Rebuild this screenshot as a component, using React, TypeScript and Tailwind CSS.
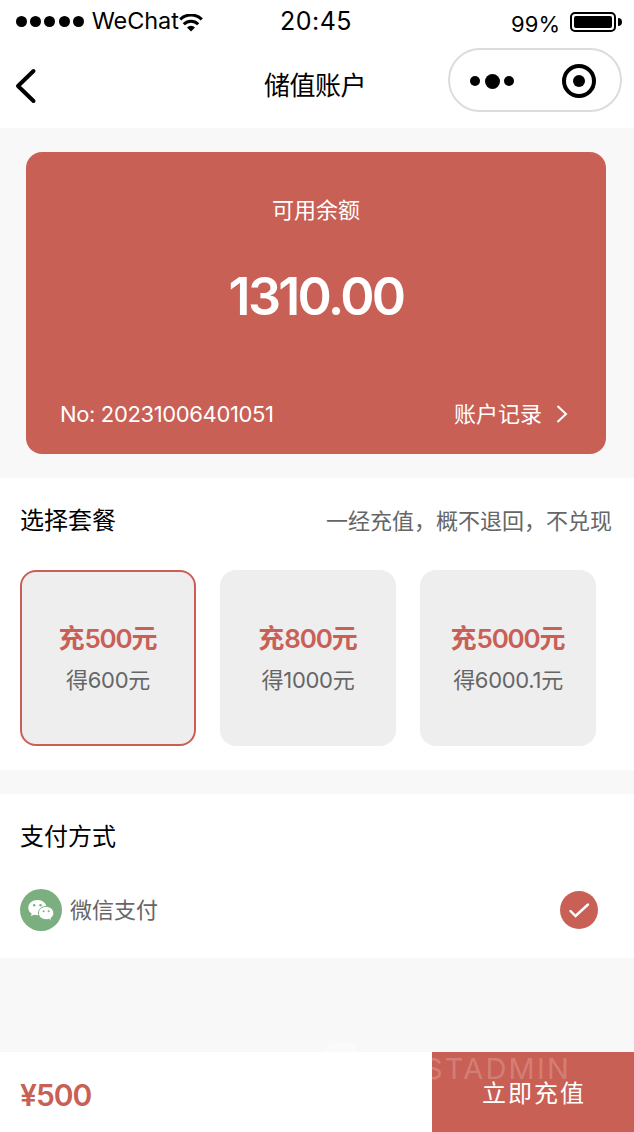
import { useState } from "react";
import clsx from "clsx";

interface Plan {
  id: number;
  price: number;
  gain: number;
}

const plans: Plan[] = [
  { id: 1, price: 500, gain: 600 },
  { id: 2, price: 800, gain: 1000 },
  { id: 3, price: 5000, gain: 6000.1 },
];

function StatusBar() {
  return (
    <div className="grid grid-cols-3 h-11 px-4 leading-[40px]">
      <div className="flex h-[43px] items-center">
        <div className="flex gap-[3.2px]">
          {Array.from({ length: 5 }, (_, i) => (
            <span key={i} className="size-[11px] rounded-full bg-black" />
          ))}
        </div>
        <span className="-mt-[2px] ml-2 text-[23.5px] tracking-[-0.1px]">WeChat</span>
        <svg width="24" height="18" viewBox="0 0 24 18" className="mt-[3px] shrink-0" fill="none" stroke="black" strokeWidth="3">
          <path d="M1.2 5.4a15.4 15.4 0 0 1 21.6 0" />
          <path d="M4.8 10.2a10.2 10.2 0 0 1 14.4 0" />
          <path d="M8 13.4a5.8 5.8 0 0 1 8 0L12 17.6z" fill="black" stroke="none" />
        </svg>
      </div>
      <span className="-ml-[2px] text-center text-[25px] leading-[42px] tracking-[0.5px]">20:45</span>
      <div className="-mr-1 flex h-10 items-center justify-end pt-1">
        <span className="mt-1 text-[22px]">99%</span>
        <span className="ml-[10px] h-5 w-[46px] rounded-[5px] border-2 border-black p-[2px]">
          <span className="block h-full rounded-[2px] bg-black" />
        </span>
        <span className="ml-[2px] h-2 w-1 rounded-r-full bg-black" />
      </div>
    </div>
  );
}

function NavBar() {
  return (
    <div className="grid h-[84px] grid-cols-[1fr_auto_1fr] items-start">
      <svg width="22" height="36" viewBox="0 0 22 36" className="ml-[15px] mt-6" fill="none" stroke="black" strokeWidth="4" strokeLinecap="round" strokeLinejoin="round">
        <path d="M18.5 3L3 18L18.5 33" />
      </svg>
      <h1 className="mr-1 text-[26px] leading-[83px] tracking-[-0.5px]">储值账户</h1>
      <div className="mr-3 mt-1 flex h-16 w-[174px] items-center justify-self-end rounded-full border-2 border-[#dcdcdc]">
        <div className="ml-5 mt-[2px] flex items-center gap-[4.5px]">
          <span className="size-[10px] rounded-full bg-black" />
          <span className="size-[15px] rounded-full bg-black" />
          <span className="size-[10px] rounded-full bg-black" />
        </div>
        <div className="ml-[48px] mt-[1px] flex size-[34px] items-center justify-center rounded-full border-4 border-black">
          <span className="size-3 rounded-full bg-black" />
        </div>
      </div>
    </div>
  );
}

function BalanceCard() {
  return (
    <div className="mx-[26px] mr-7 mt-6 flex h-[302px] flex-col rounded-2xl bg-[#c96056] text-white">
      <p className="mt-[42px] text-center text-[22px] leading-8">可用余额</p>
      <p className="mt-[39px] text-center text-[52px] font-semibold leading-[64px] tracking-[-2.7px]">1310.00</p>
      <div className="mt-auto flex h-8 items-center justify-between mb-6 pl-[34px] pr-[38px] text-[22px]">
        <span className="tracking-[-0.36px]">No: 20231006401051</span>
        <span className="flex items-center">
          账户记录
          <svg width="12" height="18" viewBox="0 0 12 18" className="ml-[14px]" fill="none" stroke="white" strokeWidth="2">
            <path d="M1.5 1L10 9L1.5 17" />
          </svg>
        </span>
      </div>
    </div>
  );
}

function WechatIcon() {
  return (
    <svg width="42" height="42" viewBox="0 0 42 42">
      <circle cx="21" cy="21" r="21" fill="#7caf7f" />
      <path d="M17.5 11c-5.1 0-9.2 3.4-9.2 7.7 0 2.5 1.3 4.6 3.4 6l-.8 2.6 3.1-1.6c1.1.3 2.3.5 3.5.5 5 0 9.1-3.4 9.1-7.5 0-4.3-4.1-7.7-9.1-7.7z" fill="white" />
      <circle cx="14.2" cy="16.2" r="1.2" fill="#7caf7f" />
      <circle cx="20.5" cy="16.2" r="1.2" fill="#7caf7f" />
      <path d="M26.2 17.4c-4.3 0-7.8 3-7.8 6.7s3.5 6.6 7.8 6.6c.9 0 1.8-.1 2.6-.4l2.8 1.5-.7-2.5c1.8-1.2 2.9-3 2.9-5.1 0-3.8-3.4-6.8-7.6-6.8z" fill="white" stroke="#7caf7f" strokeWidth="1" />
      <circle cx="23.6" cy="22.3" r="1" fill="#7caf7f" />
      <circle cx="28.6" cy="22.3" r="1" fill="#7caf7f" />
    </svg>
  );
}

export default function App() {
  const [selectedId, setSelectedId] = useState(1);
  const selected = plans.find((plan) => plan.id === selectedId);

  return (
    <div className="flex h-[1132px] w-[634px] flex-col overflow-hidden bg-[#f8f8f8] font-['Inter','Noto_Sans_CJK_SC',sans-serif] text-black">
      <header className="h-32 bg-white">
        <StatusBar />
        <NavBar />
      </header>

      <BalanceCard />

      <section className="mt-6 h-[292px] bg-white px-5 pt-[25px]">
        <div className="flex items-center justify-between">
          <h2 className="text-2xl leading-9">选择套餐</h2>
          <span className="mr-[2px] text-[22px] leading-9 text-[#666]">一经充值，概不退回，不兑现</span>
        </div>
        <div className="mt-[31px] flex gap-6">
          {plans.map((plan) => (
            <button
              key={plan.id}
              onClick={() => setSelectedId(plan.id)}
              className={clsx(
                "flex size-44 flex-col items-center rounded-2xl border-2 bg-[#eee] pt-[47px]",
                plan.id === selectedId ? "border-[#c96056]" : "border-[#eee]"
              )}
            >
              <span className="text-[26px] font-semibold leading-10 text-[#c96056]">
                充<span className="tracking-[-1.2px]">{plan.price}</span>元
              </span>
              <span className="mt-[1px] text-[22px] leading-10 tracking-[-0.3px] text-[#666]">得{plan.gain}元</span>
            </button>
          ))}
        </div>
      </section>

      <section className="mt-6 h-[164px] bg-white px-5 pt-[25px]">
        <h2 className="text-2xl leading-9">支付方式</h2>
        <div className="mt-[34px] flex items-center">
          <WechatIcon />
          <span className="ml-2 text-[22px] leading-[42px] text-[#666]">微信支付</span>
          <svg width="38" height="38" viewBox="0 0 38 38" className="ml-auto mr-4">
            <circle cx="19" cy="19" r="19" fill="#c96056" />
            <path d="M10.5 20L15.5 25L28 13.5" fill="none" stroke="white" strokeWidth="2.4" strokeLinecap="round" />
          </svg>
        </div>
      </section>

      <footer className="relative mt-auto flex h-20 bg-white">
        <span className="absolute left-[325px] -top-[10px] h-[10px] w-8 rounded-t-full bg-[#fafafa]" />
        <span className="flex-1 pl-5 text-[30px] font-semibold leading-[86px] tracking-[-1px] text-[#c96056]">¥{selected?.price}</span>
        <button className="relative w-[202px] overflow-hidden bg-[#c96056] text-2xl tracking-[2px] text-white">
          <span className="absolute -left-[8px] top-0 text-[29px] leading-[34px] tracking-[2.2px] text-white/20">STADMIN</span>
          <span className="relative top-[2px] left-[1px]">立即充值</span>
        </button>
      </footer>
    </div>
  );
}
